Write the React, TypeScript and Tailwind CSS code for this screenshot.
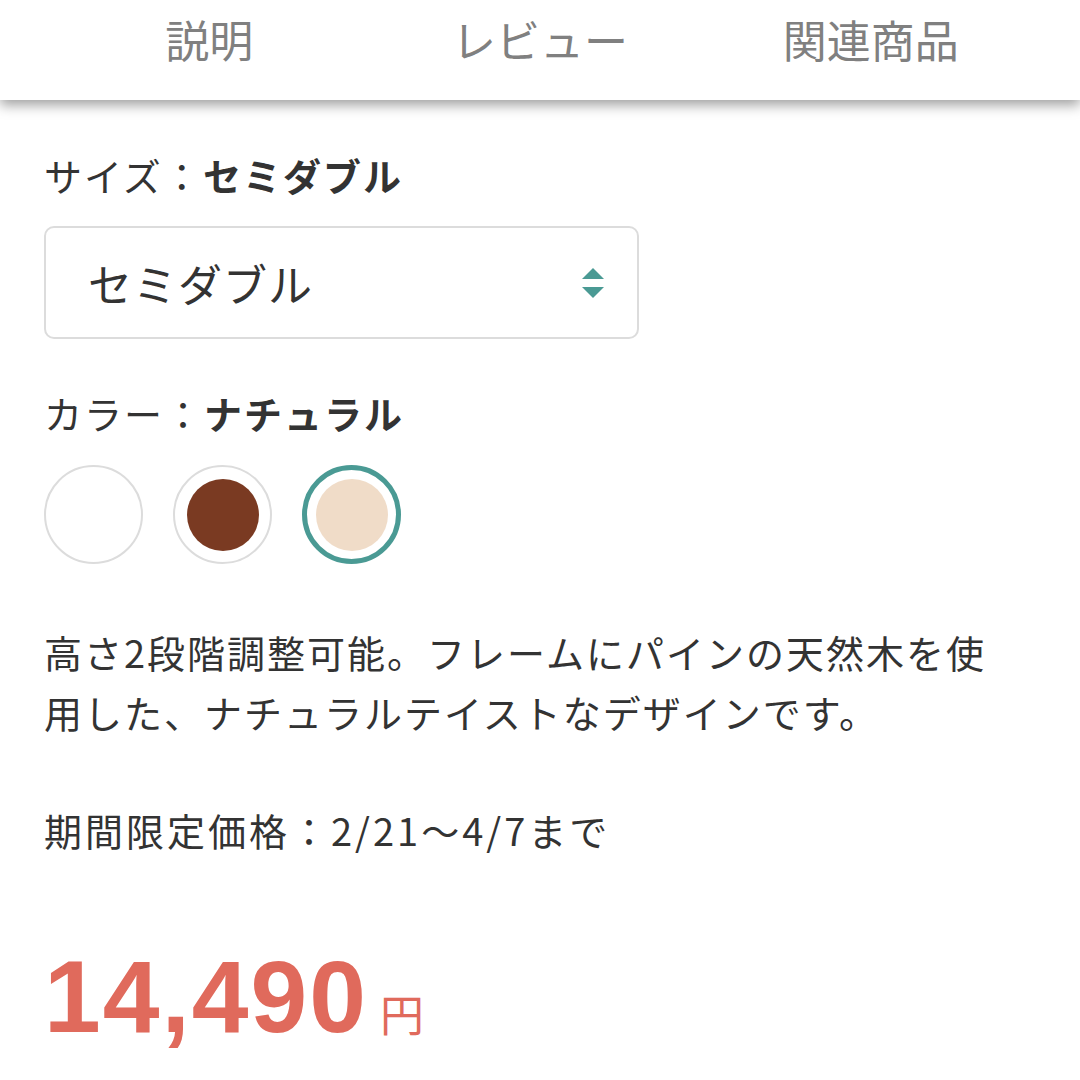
import { useState } from "react";

const font = { fontFamily: '"Noto Sans CJK JP", "Noto Sans", sans-serif' };

export default function App() {
  const [color, setColor] = useState(2);
  const swatches = [
    { name: "ホワイト", fill: "bg-white" },
    { name: "ブラウン", fill: "bg-[#7a3a22]" },
    { name: "ナチュラル", fill: "bg-[#f0dcc8]" },
  ];

  return (
    <div className="w-[1080px] h-[1080px] overflow-hidden bg-white text-[#333]" style={font}>
      {/* Tabs */}
      <div className="relative z-10 h-[100px] bg-white px-[44px] pt-[17px] grid grid-cols-3 shadow-[0_5px_12px_rgba(0,0,0,0.38)]">
        {["説明", "レビュー", "関連商品"].map((t) => (
          <div key={t} className="text-center text-[44px] leading-[44px] text-[#808080]">
            {t}
          </div>
        ))}
      </div>

      <div className="px-[44px]">
        {/* Size */}
        <div className="mt-[51px] text-[38px] leading-[48px] tracking-[2px]">
          サイズ：<span className="font-bold">セミダブル</span>
        </div>
        <div className="mt-[27px] w-[595px] h-[113px] border-2 border-[#dcdcdc] rounded-[10px] flex items-center justify-between pl-[42px] pr-[32px]">
          <span className="text-[44px] leading-[48px] tracking-[1px]">セミダブル</span>
          <svg width="24" height="36" viewBox="0 0 24 36">
            <polygon points="12,3 23,14 1,14" fill="#4a9a94" />
            <polygon points="1,22 23,22 12,33" fill="#4a9a94" />
          </svg>
        </div>

        {/* Color */}
        <div className="mt-[50px] text-[38px] leading-[48px] tracking-[2px]">
          カラー：<span className="font-bold">{swatches[color].name}</span>
        </div>
        <div className="mt-[28px] flex gap-[30px]">
          {swatches.map((s, i) => (
            <button
              key={s.name}
              onClick={() => setColor(i)}
              className={`w-[99px] h-[99px] rounded-full flex items-center justify-center ${
                color === i ? "border-[5px] border-[#4a9a94]" : "border-2 border-[#dcdcdc]"
              }`}
            >
              {i > 0 && <span className={`block w-[72px] h-[72px] rounded-full ${s.fill}`} />}
            </button>
          ))}
        </div>

        {/* Description */}
        <div className="mt-[58px] text-[38px] leading-[60px] tracking-[2px]">
          <p className="whitespace-nowrap">高さ2段階調整可能。フレームにパインの天然木を使</p>
          <p className="whitespace-nowrap">用した、ナチュラルテイストなデザインです。</p>
          <p className="mt-[58px] tracking-[3px]">期間限定価格：2/21～4/7まで</p>
        </div>

        {/* Price */}
        <div className="mt-[90px] flex items-baseline text-[#e06a5c]">
          <span
            className="text-[102px] leading-[94px] font-bold tracking-[2px]"
            style={{ fontFamily: '"Liberation Sans", Arial, sans-serif' }}
          >
            14,490
          </span>
          <span className="ml-[12px] text-[44px]">円</span>
        </div>
      </div>
    </div>
  );
}
